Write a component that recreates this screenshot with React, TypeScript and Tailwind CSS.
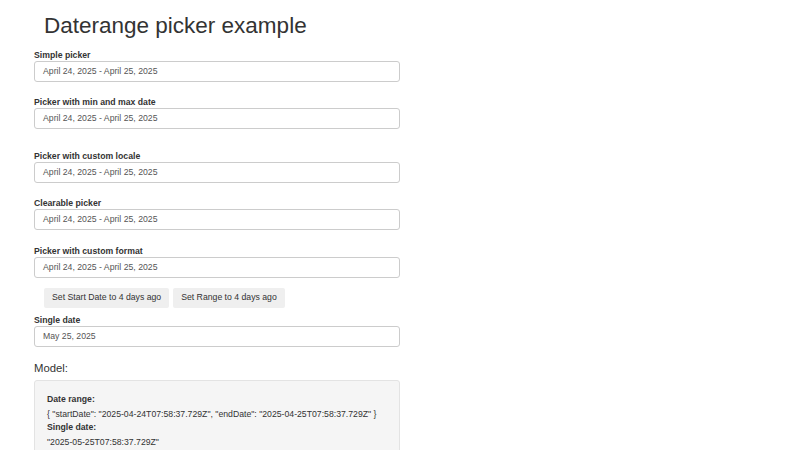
const range = "April 24, 2025 - April 25, 2025";

function Field({ label, value, className = "" }: { label: string; value: string; className?: string }) {
  return (
    <div className={className}>
      <label className="block text-[8.7px] leading-[12px] font-bold text-[#333]">{label}</label>
      <div className="h-[21px] w-[366px] border border-[#ccc] rounded-[3px] bg-white flex items-center pl-[8px] text-[8.7px] text-[#555]">
        {value}
      </div>
    </div>
  );
}

export default function App() {
  return (
    <div className="w-[800px] h-[450px] overflow-hidden bg-white pl-[34px] font-['Liberation_Sans',Arial,sans-serif] text-[#333]">
      <h1 className="pt-[12px] ml-[10px] text-[22.5px] leading-[28px] text-[#333]">Daterange picker example</h1>
      <Field className="mt-[9px]" label="Simple picker" value={range} />
      <Field className="mt-[14px]" label="Picker with min and max date" value={range} />
      <Field className="mt-[21px]" label="Picker with custom locale" value={range} />
      <Field className="mt-[14px]" label="Clearable picker" value={range} />
      <Field className="mt-[15px]" label="Picker with custom format" value={range} />
      <div className="mt-[10px] ml-[10px] flex gap-[4px]">
        <button className="h-[20px] px-[8px] bg-[#efefef] rounded-[2px] text-[8.7px] text-[#333]">Set Start Date to 4 days ago</button>
        <button className="h-[20px] px-[8px] bg-[#efefef] rounded-[2px] text-[8.7px] text-[#333]">Set Range to 4 days ago</button>
      </div>
      <Field className="mt-[6px]" label="Single date" value="May 25, 2025" />
      <h3 className="mt-[14px] text-[11.3px] leading-[14px]">Model:</h3>
      <div className="mt-[5px] w-[366px] h-[100px] border border-[#e3e3e3] rounded-[3px] bg-[#f5f5f5] pt-[12px] pl-[12px] text-[8.7px]">
        <div className="font-bold leading-[12px] mb-[3px]">Date range:</div>
        <div className="leading-[12px] mb-[1px]">{'{ "startDate": "2025-04-24T07:58:37.729Z", "endDate": "2025-04-25T07:58:37.729Z" }'}</div>
        <div className="font-bold leading-[12px] mb-[3px]">Single date:</div>
        <div className="leading-[12px]">"2025-05-25T07:58:37.729Z"</div>
      </div>
    </div>
  );
}
